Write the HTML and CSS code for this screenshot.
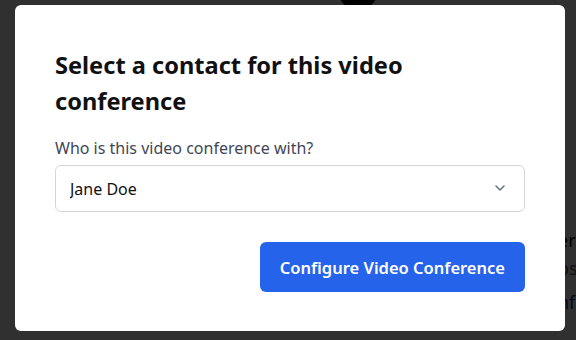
FILE: index.html
```html
<!DOCTYPE html>
<html lang="en">
<head>
  <meta charset="UTF-8" />
  <meta name="viewport" content="width=device-width, initial-scale=1.0"/>
  <title>Video Conference</title>
  <link rel="stylesheet" href="styles.css">
</head>
<body>
  <div class="page">
    <div class="avatar"></div>
    <div class="side-text">
      <p class="side-title">er</p>
      <p class="side-muted">os</p>
      <p class="side-link">nfo</p>
    </div>
  </div>

  <div class="overlay">
    <div class="modal">
      <h2>Select a contact for this video conference</h2>
      <label for="contact">Who is this video conference with?</label>
      <div class="select-wrap">
        <select id="contact">
          <option>Jane Doe</option>
          <option>John Smith</option>
        </select>
        <svg class="chevron" viewBox="0 0 20 20" width="20" height="20">
          <path d="M6 8l4 4 4-4" fill="none" stroke="currentColor" stroke-width="1.6" stroke-linecap="round" stroke-linejoin="round"/>
        </svg>
      </div>
      <div class="actions">
        <button type="button">Configure Video Conference</button>
      </div>
    </div>
  </div>
</body>
</html>
```

FILE: styles.css
```css
* {
  box-sizing: border-box;
}

body {
  margin: 0;
  font-family: "Noto Sans", "Open Sans", sans-serif;
  background: #fff;
  width: 576px;
  height: 340px;
  overflow: hidden;
}

.page {
  position: relative;
  height: 340px;
}

.avatar {
  position: absolute;
  left: 338px;
  top: -30px;
  width: 40px;
  height: 40px;
  border-radius: 50%;
  background: #000;
}

.side-text {
  position: absolute;
  left: 558px;
  top: 226px;
  font-size: 18px;
}

.side-text p {
  margin: 0;
}

.side-title {
  color: #000;
  line-height: 28px;
}

.side-muted {
  color: #555;
  line-height: 28px;
}

.side-link {
  color: #1e3a8a;
  line-height: 40px;
}

.overlay {
  position: absolute;
  inset: 0;
  background: rgba(0, 0, 0, 0.81);
  padding: 5px 11px 9px 15px;
}

.modal {
  background: #fff;
  width: 550px;
  height: 326px;
  border-radius: 6px;
  padding: 42px 40px 39px 40px;
}

h2 {
  margin: 0 0 17px;
  font-size: 23.6px;
  line-height: 36px;
  font-weight: 700;
  color: #111;
}

label {
  display: block;
  font-size: 16px;
  line-height: 24px;
  color: #3f4756;
  margin-bottom: 5px;
}

.select-wrap {
  position: relative;
}

select {
  width: 100%;
  height: 47px;
  appearance: none;
  border: 1px solid #d1d5db;
  border-radius: 6px;
  background: #fff;
  padding: 0 40px 0 14px;
  font-family: inherit;
  font-size: 16px;
  color: #111;
}

.chevron {
  position: absolute;
  right: 15px;
  top: 13px;
  color: #6b7280;
  pointer-events: none;
}

.actions {
  display: flex;
  justify-content: flex-end;
  margin-top: 30px;
}

button {
  height: 50px;
  padding: 0 20px;
  background: #2563eb;
  color: #fff;
  border: none;
  border-radius: 6px;
  font-family: inherit;
  font-size: 16.5px;
  font-weight: 600;
  cursor: pointer;
}
```
